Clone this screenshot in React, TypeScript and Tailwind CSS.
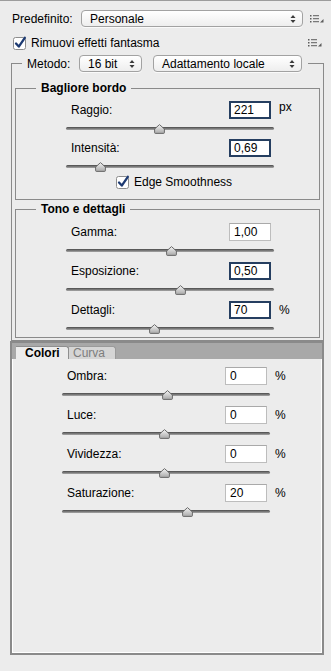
import React from "react"

type CtlProps = {
  label: string
  value: string
  unit?: string
  focused?: boolean
  thumb: number
  slider: string
  unitTop?: boolean
}

const MenuIcon = ({ className = "" }: { className?: string }) => (
  <svg className={className} width="14" height="8" viewBox="0 0 14 8">
    <g fill="#5c5c5c">
      <rect x="0" y="0" width="1.5" height="1.5" />
      <rect x="0" y="3" width="1.5" height="1.5" />
      <rect x="0" y="6" width="1.5" height="1.5" />
      <rect x="3" y="0.2" width="6" height="1" />
      <rect x="3" y="3.2" width="6" height="1" />
      <rect x="3" y="6.2" width="6" height="1" />
      <path d="M10 7.5 L13.5 7.5 L13.5 4 Z" />
    </g>
  </svg>
)

const Arrows = () => (
  <svg width="6" height="10" viewBox="0 0 6 10">
    <path d="M3 1 L5.5 4 L0.5 4 Z" fill="#3a3a3a" />
    <path d="M3 9 L5.5 6 L0.5 6 Z" fill="#3a3a3a" />
  </svg>
)

const Select = ({ label, className }: { label: string; className: string }) => (
  <div
    className={`h-[17px] rounded-[4px] border border-[#a2a2a2] bg-linear-to-b from-white to-[#eeeeee] shadow-[0_1px_0_#fafafa] flex items-center justify-between pl-[8px] pr-[6px] ${className}`}
  >
    <span className="leading-[14px]">{label}</span>
    <Arrows />
  </div>
)

const CheckBox = () => (
  <svg width="15" height="14" viewBox="0 0 15 14">
    <rect x="0.5" y="1.5" width="12" height="12" rx="2" fill="#fff" stroke="#8d8d8d" />
    <path
      d="M3 7.5 L5.8 10.6 L11.8 1.8"
      stroke="#1d3a72"
      strokeWidth="2.3"
      fill="none"
      strokeLinecap="round"
      strokeLinejoin="round"
    />
  </svg>
)

const Thumb = ({ left }: { left: number }) => (
  <svg className="absolute top-[5px]" style={{ left: left - 5 }} width="11" height="10" viewBox="0 0 11 10">
    <defs>
      <linearGradient id="thumbg" x1="0" y1="0" x2="0" y2="1">
        <stop offset="0" stopColor="#f4f4f4" />
        <stop offset="1" stopColor="#a8a8a8" />
      </linearGradient>
    </defs>
    <path d="M5.5 0.6 L10.4 5 L10.4 8.6 Q10.4 9.4 9.6 9.4 L1.4 9.4 Q0.6 9.4 0.6 8.6 L0.6 5 Z" fill="url(#thumbg)" stroke="#5e5e5e" strokeWidth="0.9" />
  </svg>
)

const Slider = ({ thumb, className }: { thumb: number; className: string }) => (
  <div className={`relative w-[208px] ${className}`}>
    <div className="absolute left-0 right-0 top-[8px] h-[3px] rounded-full bg-linear-to-b from-[#4a4a4a] to-[#a8a8a8]" />
    <Thumb left={thumb} />
  </div>
)

const NumField = ({ value, focused }: { value: string; focused?: boolean }) => (
  <div
    className={`w-[42px] h-[18px] bg-white flex items-center leading-[14px] ${
      focused
        ? "border-2 border-[#253e60] pl-[3px]"
        : "border border-[#bdbdbd] border-t-[#a9a9a9] pl-[4px]"
    }`}
  >
    {value}
  </div>
)

const Control = ({ label, value, unit, focused, thumb, slider, unitTop }: CtlProps) => (
  <div>
    <div className="grid grid-cols-[163px_42px_auto] items-center h-[18px]">
      <span className="pl-[5px]">{label}</span>
      <NumField value={value} focused={focused} />
      {unit && (
        <span className={`pl-[8px] ${unitTop ? "self-start leading-[12px]" : ""}`}>{unit}</span>
      )}
    </div>
    <Slider thumb={thumb} className={slider} />
  </div>
)

export default function App() {
  return (
    <div className="h-[671px] overflow-hidden flex flex-col bg-[#ececec] border-t border-[#9c9c9c] text-[12px] leading-[14px] text-black font-['Liberation_Sans',Arial,sans-serif]">
      {/* preset row */}
      <div className="flex items-center h-[17px] mt-[9px] pl-[12px] shrink-0">
        <span className="w-[69px]">Predefinito:</span>
        <Select label="Personale" className="w-[222px]" />
        <MenuIcon className="ml-[7px]" />
      </div>

      <div className="flex items-center h-[14px] mt-[9px] pl-[13px] shrink-0">
        <CheckBox />
        <span className="ml-[3px] flex-1">Rimuovi effetti fantasma</span>
        <MenuIcon className="mr-[9px]" />
      </div>

      {/* Metodo group */}
      <fieldset className="shrink-0 mt-[5px] ml-[11px] w-[313px] border border-[#8a8a8a] px-[3px] pb-[2px]">
        <legend className="ml-[7px] pl-[5px] pr-[6px]">
          <div className="flex items-center h-[17px]">
            <span className="w-[52px]">Metodo:</span>
            <Select label="16 bit" className="w-[63px]" />
            <Select label="Adattamento locale" className="w-[149px] ml-[11px]" />
          </div>
        </legend>

        <fieldset className="mt-[9px] border border-[#8a8a8a] pb-[10px]">
          <legend className="ml-[20px] px-[5px] font-bold">Bagliore bordo</legend>
          <div className="ml-[50px] mt-[6px]">
            <Control label="Raggio:" value="221" unit="px" unitTop focused thumb={93} slider="h-[20px]" />
            <Control label="Intensità:" value="0,69" focused thumb={34} slider="h-[18px]" />
          </div>
          <div className="flex items-center h-[14px] ml-[100px]">
            <CheckBox />
            <span className="ml-[3px]">Edge Smoothness</span>
          </div>
        </fieldset>

        <fieldset className="mt-[2px] border border-[#8a8a8a]">
          <legend className="ml-[20px] px-[5px] font-bold">Tono e dettagli</legend>
          <div className="ml-[50px] mt-[7px]">
            <Control label="Gamma:" value="1,00" thumb={105} slider="h-[21px]" />
            <Control label="Esposizione:" value="0,50" focused thumb={114} slider="h-[21px]" />
            <Control label="Dettagli:" value="70" unit="%" focused thumb={88} slider="h-[18px]" />
          </div>
        </fieldset>
      </fieldset>

      {/* tabs */}
      <div className="shrink-0 h-[314px] ml-[10px] w-[314px] border-2 border-[#8a8a8a] flex flex-col">
        <div className="h-[16px] bg-[#a8a8a8] flex items-end pl-[4px]">
          <div className="h-[13px] w-[53px] bg-[#ececec] rounded-tr-[3px] border-t border-r border-[#8f8f8f] font-bold leading-[12px] pl-[9px]">
            Colori
          </div>
          <div className="h-[13px] w-[47px] bg-[#d5d5d5] rounded-tr-[3px] border-t border-r border-[#9a9a9a] text-[#7d7d7d] leading-[12px] pl-[4px]">
            Curva
          </div>
        </div>
        <div className="flex-1 border border-white border-t-0 pt-[8px]">
          <div className="ml-[49px]">
            <Control label="Ombra:" value="0" unit="%" thumb={105} slider="h-[21px]" />
            <Control label="Luce:" value="0" unit="%" thumb={102} slider="h-[21px]" />
            <Control label="Vividezza:" value="0" unit="%" thumb={102} slider="h-[21px]" />
            <Control label="Saturazione:" value="20" unit="%" thumb={125} slider="h-[21px]" />
          </div>
        </div>
      </div>
    </div>
  )
}
